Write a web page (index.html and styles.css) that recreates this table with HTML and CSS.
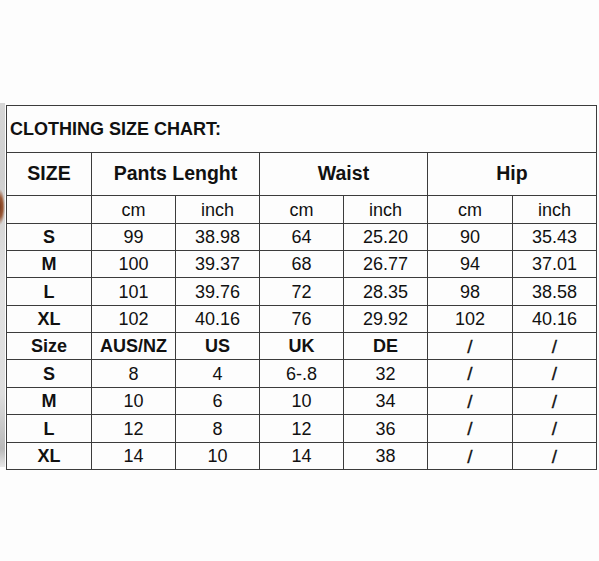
FILE: index.html
```html
<!DOCTYPE html>
<html lang="en">
<head>
<meta charset="utf-8">
<title>Clothing Size Chart</title>
<link rel="stylesheet" href="styles.css">
</head>
<body>
<div class="page">
  <div class="strip"></div>
  <div class="chart">
    <div class="cell title">CLOTHING SIZE CHART:</div>

    <div class="cell head">SIZE</div>
    <div class="cell head span2">Pants Lenght</div>
    <div class="cell head span2">Waist</div>
    <div class="cell head span2">Hip</div>

    <div class="cell"></div>
    <div class="cell">cm</div>
    <div class="cell">inch</div>
    <div class="cell">cm</div>
    <div class="cell">inch</div>
    <div class="cell">cm</div>
    <div class="cell">inch</div>

    <div class="cell b">S</div>
    <div class="cell">99</div>
    <div class="cell">38.98</div>
    <div class="cell">64</div>
    <div class="cell">25.20</div>
    <div class="cell">90</div>
    <div class="cell">35.43</div>

    <div class="cell b">M</div>
    <div class="cell">100</div>
    <div class="cell">39.37</div>
    <div class="cell">68</div>
    <div class="cell">26.77</div>
    <div class="cell">94</div>
    <div class="cell">37.01</div>

    <div class="cell b">L</div>
    <div class="cell">101</div>
    <div class="cell">39.76</div>
    <div class="cell">72</div>
    <div class="cell">28.35</div>
    <div class="cell">98</div>
    <div class="cell">38.58</div>

    <div class="cell b">XL</div>
    <div class="cell">102</div>
    <div class="cell">40.16</div>
    <div class="cell">76</div>
    <div class="cell">29.92</div>
    <div class="cell">102</div>
    <div class="cell">40.16</div>

    <div class="cell b">Size</div>
    <div class="cell b">AUS/NZ</div>
    <div class="cell b">US</div>
    <div class="cell b">UK</div>
    <div class="cell b">DE</div>
    <div class="cell slash">/</div>
    <div class="cell slash">/</div>

    <div class="cell b">S</div>
    <div class="cell">8</div>
    <div class="cell">4</div>
    <div class="cell">6-.8</div>
    <div class="cell">32</div>
    <div class="cell slash">/</div>
    <div class="cell slash">/</div>

    <div class="cell b">M</div>
    <div class="cell">10</div>
    <div class="cell">6</div>
    <div class="cell">10</div>
    <div class="cell">34</div>
    <div class="cell slash">/</div>
    <div class="cell slash">/</div>

    <div class="cell b">L</div>
    <div class="cell">12</div>
    <div class="cell">8</div>
    <div class="cell">12</div>
    <div class="cell">36</div>
    <div class="cell slash">/</div>
    <div class="cell slash">/</div>

    <div class="cell b">XL</div>
    <div class="cell">14</div>
    <div class="cell">10</div>
    <div class="cell">14</div>
    <div class="cell">38</div>
    <div class="cell slash">/</div>
    <div class="cell slash">/</div>
  </div>
</div>
</body>
</html>
```

FILE: styles.css
```css
html, body {
  margin: 0;
  padding: 0;
  background: #fdfdfd;
}

body {
  font-family: "Liberation Sans", Arial, sans-serif;
  color: #111;
}

.page {
  display: flex;
  align-items: flex-start;
  padding-top: 105px;
}

.strip {
  width: 5px;
  height: 364px;
  margin-top: -2px;
  margin-right: 1px;
  background:
    radial-gradient(ellipse 5px 18px at 0px 104px, #7a3b1c 0%, #9a5a38 55%, rgba(200,180,170,0) 100%),
    linear-gradient(to bottom, #d6d6d6 0%, #cfcfcf 20%, #e2e2e2 50%, #dedede 80%, #b9b9b9 95%, #e8e8e8 100%);
}

.chart {
  display: grid;
  grid-template-columns: 84px 83px 83px 83px 83px 84px 83px;
  grid-template-rows: 46px 42px 27px 26px 26px 27px 26px 26px 27px 26px 27px 26px;
  gap: 1px;
  padding: 1px;
  background: #3c3c3c;
}

.cell {
  background: #fdfdfd;
  display: flex;
  align-items: center;
  justify-content: center;
  font-size: 18px;
  line-height: 1;
  white-space: nowrap;
}

.title {
  grid-column: 1 / -1;
  justify-content: flex-start;
  padding-left: 3px;
  font-weight: bold;
  font-size: 18px;
}

.head {
  font-weight: bold;
  font-size: 19.5px;
}

.span2 {
  grid-column: span 2;
}

.b {
  font-weight: bold;
}

.slash {
  font-size: 19px;
  -webkit-text-stroke: 0.3px #111;
}
```
